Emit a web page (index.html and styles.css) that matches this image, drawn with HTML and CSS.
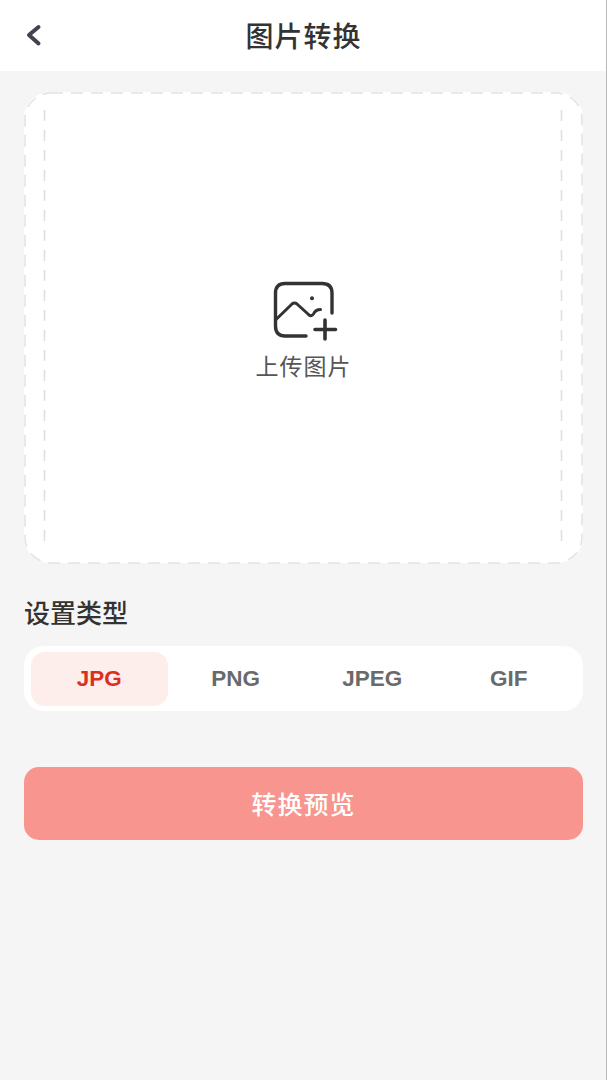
FILE: index.html
```html
<!DOCTYPE html>
<html lang="zh-CN">
<head>
    <meta charset="UTF-8">
    <meta name="viewport" content="width=device-width, initial-scale=1.0">
    <title>图片转换</title>
    <link rel="stylesheet" href="styles.css">
</head>
<body>
    <div class="header">
        <svg class="back-icon" viewBox="0 0 18 24" width="18" height="24">
            <path d="M14.5 4 L5 12 L14.5 20.5" fill="none" stroke="#43434f" stroke-width="4" stroke-linecap="round" stroke-linejoin="round"/>
        </svg>
        <h1>图片转换</h1>
    </div>

    <div class="content">
        <!-- Upload box -->
        <div class="upload-box">
            <svg class="upload-dashes" viewBox="0 0 559 472" width="559" height="472">
                <rect x="1" y="1" width="557" height="470" rx="26" fill="none" stroke="#e2e2e2" stroke-width="1.5" stroke-dasharray="12 8"/>
                <path d="M20.5 18 V456 M537.5 18 V456" fill="none" stroke="#dedede" stroke-width="1.5" stroke-dasharray="11 9"/>
            </svg>
            <svg class="upload-icon" viewBox="0 0 68 60" width="68" height="60">
                <path d="M36 55 H15 Q5.5 55 5.5 45 V12 Q5.5 2.5 15 2.5 H52 Q62 2.5 62 12 V32" fill="none" stroke="#333" stroke-width="3.4" stroke-linecap="round"/>
                <path d="M5.5 39 L22 23 Q24.5 21 27 23 L38 33 Q41 36.5 43.5 33 Q45.5 28.5 50.5 28.5" fill="none" stroke="#333" stroke-width="3" stroke-linecap="round" stroke-linejoin="round"/>
                <circle cx="42" cy="17.3" r="2" fill="#333"/>
                <path d="M45 48.5 H65.5 M55 39 V58" fill="none" stroke="#333" stroke-width="3.6" stroke-linecap="round"/>
            </svg>
            <p class="upload-text">上传图片</p>
        </div>

        <h2 class="section-title">设置类型</h2>

        <div class="type-tabs">
            <div class="tab tab-active">JPG</div>
            <div class="tab">PNG</div>
            <div class="tab">JPEG</div>
            <div class="tab">GIF</div>
        </div>

        <button class="btn-convert">转换预览</button>
    </div>
</body>
</html>
```

FILE: styles.css
```css
* {
    margin: 0;
    padding: 0;
    box-sizing: border-box;
    font-family: "Liberation Sans", "Noto Sans CJK SC", sans-serif;
}

body {
    background-color: #f5f5f5;
    min-height: 100vh;
    overflow: hidden;
}

/* thin grey edge down the right side of the screen */
body::after {
    content: "";
    position: fixed;
    top: 0;
    right: 0;
    bottom: 0;
    width: 1px;
    background: #b8b8b8;
}

.header {
    position: relative;
    height: 71px;
    background: #fff;
    display: flex;
    justify-content: center;
    align-items: center;
}

.header h1 {
    font-size: 28px;
    font-weight: 500;
    color: #333;
    letter-spacing: 1px;
    margin-top: -2px;
}

.back-icon {
    position: absolute;
    left: 24px;
    top: 23px;
}

.content {
    padding: 21px 24px 0;
}

.upload-box {
    position: relative;
    height: 471px;
    background: #fff;
    border-radius: 26px;
    display: flex;
    flex-direction: column;
    align-items: center;
    padding-top: 189px;
}

.upload-dashes {
    position: absolute;
    left: 0;
    top: 0;
}

.upload-icon {
    display: block;
}

.upload-text {
    margin-top: 7px;
    font-size: 23px;
    color: #555;
    letter-spacing: 1px;
}

.section-title {
    margin-top: 35px;
    font-size: 26px;
    font-weight: 500;
    color: #333;
    line-height: 32px;
}

.type-tabs {
    margin-top: 16px;
    height: 65px;
    background: #fff;
    border-radius: 20px;
    padding: 6px 6px 5px 7px;
    display: flex;
}

.tab {
    flex: 1;
    display: flex;
    justify-content: center;
    align-items: center;
    font-size: 22.5px;
    font-weight: 700;
    color: #6a6a6a;
    border-radius: 14px;
}

.tab-active {
    background: #fdeeeb;
    color: #d9301f;
}

.btn-convert {
    display: block;
    width: 100%;
    margin-top: 56px;
    height: 73px;
    border: none;
    border-radius: 15px;
    background: #f8958f;
    color: #fff;
    font-size: 25px;
    font-weight: 500;
    letter-spacing: 1px;
    padding-bottom: 2px;
}
```
